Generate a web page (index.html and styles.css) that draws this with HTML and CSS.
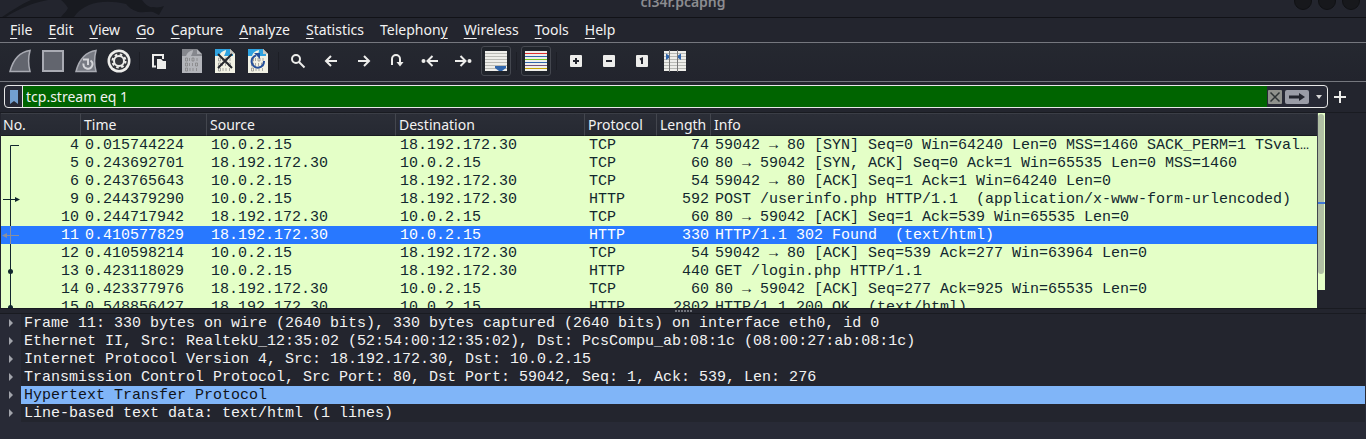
FILE: index.html
```html
<!DOCTYPE html>
<html lang="en">
<head>
<meta charset="utf-8">
<title>cl34r.pcapng</title>
<link rel="stylesheet" href="styles.css">
</head>
<body>
<header class="titlebar">
  <svg class="dragon" width="170" height="17" viewBox="0 0 170 17" aria-hidden="true">
    <path d="M2 17C12 10 22 4 31 0H48C32 3 18 9 6 17Z" fill="#181a20"/>
    <path d="M61 0H142C145 4 149 8 153 7C158 8 161 7 164 6L159 15L153 12C147 11 141 14 136 11C130 9 128 6 126 4C112 1 100 1 89 5C82 8 77 12 74 17H61C64 13 67 11 68 8C66 5 64 2 61 0Z" fill="#181a20"/>
  </svg>
  <span class="caption">cl34r.pcapng</span>
  <div class="winbuttons"><button aria-label="Minimize"></button><button aria-label="Maximize"></button><button aria-label="Close"></button></div>
</header>
<nav class="menubar">
  <button><u>F</u>ile</button><button><u>E</u>dit</button><button><u>V</u>iew</button><button><u>G</u>o</button><button><u>C</u>apture</button><button><u>A</u>nalyze</button><button><u>S</u>tatistics</button><button>Telephon<u>y</u></button><button><u>W</u>ireless</button><button><u>T</u>ools</button><button><u>H</u>elp</button>
</nav>
<div class="toolbar">
  <button aria-label="Start capture"><svg viewBox="0 0 24 24"><path d="M2 22.500C5 11 11 3 22 1.500C20 9 20 15 22 22.500Z" fill="#62656e" stroke="#a9abb3" stroke-width="1.500"/></svg></button>
  <button aria-label="Stop capture"><svg viewBox="0 0 24 24"><path d="M2 2H22V22H2Z" fill="#62656e" stroke="#a9abb3" stroke-width="2"/></svg></button>
  <button aria-label="Restart capture"><svg viewBox="0 0 24 24"><path d="M2 22.500C5 11 11 3 22 1.500C20 9 20 15 22 22.500Z" fill="#777a83" stroke="#a9abb3" stroke-width="1.500"/><path d="M16.500 11.500A4.500 4.500 0 1 1 9.500 14.500M9 10.500H14V16" fill="none" stroke="#d5d6da" stroke-width="2"/></svg></button>
  <button aria-label="Capture options"><svg viewBox="0 0 24 24"><circle cx="12" cy="12" r="11.500" fill="#ededeb"/><circle cx="12" cy="12" r="9" fill="#33353b"/><circle cx="12" cy="12" r="6.500" fill="none" stroke="#ededeb" stroke-width="2" stroke-dasharray="2.550"/><circle cx="12" cy="12" r="5" fill="none" stroke="#ededeb" stroke-width="2"/></svg></button>
  <span class="sep"></span>
  <button aria-label="Open"><svg viewBox="0 0 24 24"><path d="M9 17.500H6V6H16V10" fill="none" stroke="#ededeb" stroke-width="2"/><path d="M10 10H14L16 12H19V20H10Z" fill="#ededeb"/></svg></button>
  <button aria-label="Save"><svg viewBox="0 0 24 24"><path d="M2 0H17L22 5V24H2Z" fill="#b3b5ba"/><path d="M2 0H17V5H22V7H11C12 5 13 3 13 1C9 2 7 4 6 7H2Z" fill="#85878d"/><use href="#bits"/></svg></button>
  <button aria-label="Close file"><svg viewBox="0 0 24 24"><path d="M2 0H17L22 5V24H2Z" fill="#f2f2e4"/><path d="M2 0H17V5H20V7H11C12 5 13 3 13 1C9 2 7 4 6 7H2Z" fill="#2fa3e0"/><path d="M17 0V5H22Z" fill="#c9c9c0"/><use href="#bits"/><path d="M5 5L19 19M19 5L5 19" stroke="#24272c" stroke-width="2"/></svg></button>
  <button aria-label="Reload"><svg viewBox="0 0 24 24"><path d="M2 0H17L22 5V24H2Z" fill="#f2f2e4"/><path d="M2 0H17V5H20V7H11C12 5 13 3 13 1C9 2 7 4 6 7H2Z" fill="#2fa3e0"/><path d="M17 0V5H22Z" fill="#c9c9c0"/><use href="#bits"/><path d="M18 12A6.200 6.200 0 1 1 10 6.500" fill="none" stroke="#24509c" stroke-width="2"/><path d="M8 4H14V10Z" fill="#24509c"/></svg></button>
  <span class="sep"></span>
  <button aria-label="Find"><svg viewBox="0 0 24 24"><circle cx="10" cy="10" r="4" fill="none" stroke="#ededeb" stroke-width="2"/><path d="M13 13L18.500 18.500" stroke="#ededeb" stroke-width="2"/></svg></button>
  <button aria-label="Previous packet"><svg viewBox="0 0 24 24"><path d="M18 12H7M12 7L7 12L12 17" fill="none" stroke="#ededeb" stroke-width="2"/></svg></button>
  <button aria-label="Next packet"><svg viewBox="0 0 24 24"><path d="M6 12H17M12 7L17 12L12 17" fill="none" stroke="#ededeb" stroke-width="2"/></svg></button>
  <button aria-label="Go to packet"><svg viewBox="0 0 24 24"><path d="M7 16V10A4 4 0 0 1 15 10V16" fill="none" stroke="#ededeb" stroke-width="2"/><path d="M11.500 13H18.500L15 17.500Z" fill="#ededeb"/></svg></button>
  <button aria-label="First packet"><svg viewBox="0 0 24 24"><path d="M20 12H10M14.500 7L9.500 12L14.500 17" fill="none" stroke="#ededeb" stroke-width="2"/><circle cx="5.500" cy="12" r="2" fill="#ededeb"/></svg></button>
  <button aria-label="Last packet"><svg viewBox="0 0 24 24"><path d="M4 12H14M9.500 7L14.500 12L9.500 17" fill="none" stroke="#ededeb" stroke-width="2"/><circle cx="18.500" cy="12" r="2" fill="#ededeb"/></svg></button>
  <button class="on" aria-label="Auto scroll"><svg viewBox="0 0 24 24"><path d="M1 2H23V22H1Z" fill="#eeeeea"/><path d="M1 4.500H23M1 7.500H23M1 10.500H23M1 13.500H23M1 16.500H23M1 19.500H23" stroke="#b9bab5"/><path d="M11 17H22V19L18 22H15L11 19Z" fill="#2f65ab"/></svg></button>
  <span class="sep"></span>
  <button class="on" aria-label="Colorize"><svg viewBox="0 0 24 24"><path d="M1 2H23V22H1Z" fill="#eeeeea"/><path d="M1 4.500H23" stroke="#e03030"/><path d="M1 7.500H23M1 13.500H23" stroke="#2f65ab"/><path d="M1 10.500H23" stroke="#73c81c"/><path d="M1 16.500H23" stroke="#75507b"/><path d="M1 19.500H23" stroke="#c4a000"/></svg></button>
  <span class="sep"></span>
  <button aria-label="Zoom in"><svg viewBox="0 0 24 24"><rect x="6" y="6" width="12" height="12" rx="1" fill="#ededeb"/><path d="M9 12H15M12 9V15" stroke="#23252e" stroke-width="2"/></svg></button>
  <button aria-label="Zoom out"><svg viewBox="0 0 24 24"><rect x="6" y="6" width="12" height="12" rx="1" fill="#ededeb"/><path d="M9 12H15" stroke="#23252e" stroke-width="2"/></svg></button>
  <button aria-label="Normal size"><svg viewBox="0 0 24 24"><rect x="6" y="6" width="12" height="12" rx="1" fill="#ededeb"/><path d="M10 10.500L12 9.500V15" fill="none" stroke="#23252e" stroke-width="2"/></svg></button>
  <button aria-label="Resize columns"><svg viewBox="0 0 24 24"><path d="M1 2H23V22H1Z" fill="#eeeeea"/><path d="M1 4.500H23M1 7.500H23M1 10.500H23M1 13.500H23M1 16.500H23M1 19.500H23" stroke="#b9bab5"/><path d="M6.500 1V23M14.500 1V23" stroke="#777"/><path d="M3 4.500L6 6.500V9L3 11ZM18 4.500L15 6.500V9L18 11Z" fill="#2f65ab"/></svg></button>
</div>
<div class="filterbar">
  <div class="filter">
    <button class="mark" aria-label="Bookmarks"><svg width="8" height="14" viewBox="0 0 8 14"><path d="M0 0H8V14L4 11L0 14Z" fill="#729fcf"/></svg></button>
    <input type="text" aria-label="Display filter" value="tcp.stream eq 1">
    <button class="clear" aria-label="Clear"><svg width="14" height="14" viewBox="0 0 14 14"><rect width="14" height="14" rx="1" fill="#8f918c"/><path d="M2.500 2.500L11.500 11.500M11.500 2.500L2.500 11.500" stroke="#2e3436" stroke-width="1.500"/></svg></button>
    <button class="apply" aria-label="Apply"><svg width="24" height="14" viewBox="0 0 24 14"><rect width="24" height="14" rx="2" fill="#9a9ca6"/><path d="M4 5.500H14V3L20 7L14 11V8.500H4Z" fill="#23252e"/></svg></button>
    <button class="drop" aria-label="Recent filters"><svg width="6" height="4" viewBox="0 0 6 4"><path d="M0 0H6L3 4Z" fill="#d8d8d8"/></svg></button>
  </div>
  <button class="add" aria-label="Add filter button"><svg width="12" height="12" viewBox="0 0 12 12"><path d="M0 6H12M6 0V12" stroke="#ededeb" stroke-width="2"/></svg></button>
</div>
<main class="packets">
  <div class="list">
    <table>
      <colgroup><col class="c-no"><col class="c-time"><col class="c-src"><col class="c-dst"><col class="c-proto"><col class="c-len"><col></colgroup>
      <thead><tr><th>No.</th><th>Time</th><th>Source</th><th>Destination</th><th>Protocol</th><th>Length</th><th>Info</th></tr></thead>
      <tbody>
        <tr><td><div class="no"><svg width="20" height="18"><path d="M18 9.500H9.500V18"/></svg>4</div></td><td>0.015744224</td><td>10.0.2.15</td><td>18.192.172.30</td><td>TCP</td><td class="num">74</td><td>59042 → 80 [SYN] Seq=0 Win=64240 Len=0 MSS=1460 SACK_PERM=1 TSval…</td></tr>
        <tr><td><div class="no"><svg width="20" height="18"><path d="M9.500 0V18"/></svg>5</div></td><td>0.243692701</td><td>18.192.172.30</td><td>10.0.2.15</td><td>TCP</td><td class="num">60</td><td>80 → 59042 [SYN, ACK] Seq=0 Ack=1 Win=65535 Len=0 MSS=1460</td></tr>
        <tr><td><div class="no"><svg width="20" height="18"><path d="M9.500 0V18"/></svg>6</div></td><td>0.243765643</td><td>10.0.2.15</td><td>18.192.172.30</td><td>TCP</td><td class="num">54</td><td>59042 → 80 [ACK] Seq=1 Ack=1 Win=64240 Len=0</td></tr>
        <tr><td><div class="no"><svg width="20" height="18"><path d="M9.500 0V18M2 9.500H18"/><path class="solid" d="M14 7L19 9.500L14 12Z"/></svg>9</div></td><td>0.244379290</td><td>10.0.2.15</td><td>18.192.172.30</td><td>HTTP</td><td class="num">592</td><td>POST /userinfo.php HTTP/1.1&nbsp; (application/x-www-form-urlencoded)</td></tr>
        <tr><td><div class="no"><svg width="20" height="18"><path d="M9.500 0V18"/></svg>10</div></td><td>0.244717942</td><td>18.192.172.30</td><td>10.0.2.15</td><td>TCP</td><td class="num">60</td><td>80 → 59042 [ACK] Seq=1 Ack=539 Win=65535 Len=0</td></tr>
        <tr class="current"><td><div class="no"><svg width="20" height="18"><path d="M9.500 0V18M2 9.500H18"/><path class="solid" d="M6 7L1 9.500L6 12Z"/></svg>11</div></td><td>0.410577829</td><td>18.192.172.30</td><td>10.0.2.15</td><td>HTTP</td><td class="num">330</td><td>HTTP/1.1 302 Found&nbsp; (text/html)</td></tr>
        <tr><td><div class="no"><svg width="20" height="18"><path d="M9.500 0V18"/></svg>12</div></td><td>0.410598214</td><td>10.0.2.15</td><td>18.192.172.30</td><td>TCP</td><td class="num">54</td><td>59042 → 80 [ACK] Seq=539 Ack=277 Win=63964 Len=0</td></tr>
        <tr><td><div class="no"><svg width="20" height="18"><path d="M9.500 0V18"/><circle class="solid" cx="9.500" cy="9.500" r="2.500"/></svg>13</div></td><td>0.423118029</td><td>10.0.2.15</td><td>18.192.172.30</td><td>HTTP</td><td class="num">440</td><td>GET /login.php HTTP/1.1</td></tr>
        <tr><td><div class="no"><svg width="20" height="18"><path d="M9.500 0V18"/></svg>14</div></td><td>0.423377976</td><td>18.192.172.30</td><td>10.0.2.15</td><td>TCP</td><td class="num">60</td><td>80 → 59042 [ACK] Seq=277 Ack=925 Win=65535 Len=0</td></tr>
        <tr><td><div class="no"><svg width="20" height="18"><path d="M9.500 0V18"/><circle class="solid" cx="9.500" cy="9.500" r="2.500"/></svg>15</div></td><td>0.548856427</td><td>18.192.172.30</td><td>10.0.2.15</td><td>HTTP</td><td class="num">2802</td><td>HTTP/1.1 200 OK&nbsp; (text/html)</td></tr>
      </tbody>
    </table>
  </div>
  <div class="minimap"><div class="thumb"></div><div class="here"></div></div>
</main>
<div class="splitter"><i></i><i></i><i></i><i></i><i></i><i></i></div>
<ul class="details">
  <li><button aria-label="Expand"><svg width="5" height="8"><path d="M0 0L4 4L0 8Z"/></svg></button><span>Frame 11: 330 bytes on wire (2640 bits), 330 bytes captured (2640 bits) on interface eth0, id 0</span></li>
  <li><button aria-label="Expand"><svg width="5" height="8"><path d="M0 0L4 4L0 8Z"/></svg></button><span>Ethernet II, Src: RealtekU_12:35:02 (52:54:00:12:35:02), Dst: PcsCompu_ab:08:1c (08:00:27:ab:08:1c)</span></li>
  <li><button aria-label="Expand"><svg width="5" height="8"><path d="M0 0L4 4L0 8Z"/></svg></button><span>Internet Protocol Version 4, Src: 18.192.172.30, Dst: 10.0.2.15</span></li>
  <li><button aria-label="Expand"><svg width="5" height="8"><path d="M0 0L4 4L0 8Z"/></svg></button><span>Transmission Control Protocol, Src Port: 80, Dst Port: 59042, Seq: 1, Ack: 539, Len: 276</span></li>
  <li class="picked"><button aria-label="Expand"><svg width="5" height="8"><path d="M0 0L4 4L0 8Z"/></svg></button><span>Hypertext Transfer Protocol</span></li>
  <li><button aria-label="Expand"><svg width="5" height="8"><path d="M0 0L4 4L0 8Z"/></svg></button><span>Line-based text data: text/html (1 lines)</span></li>
</ul>
<svg class="defs" width="0" height="0" aria-hidden="true"><defs><g id="bits" fill="none" stroke="#777" stroke-opacity="0.600" stroke-width="1"><path d="M5.500 9H7.500V12H5.500ZM9.500 9V12M12 9H14V12H12ZM17 9V12M5.500 14H7.500V17H5.500ZM9.500 14V17M12.500 14V17M15.500 14H17.500V17H15.500ZM5.500 19H7.500V22H5.500ZM10 19V22M13 19V22M16.500 19V22"/></g></defs></svg>
</body>
</html>
```
FILE: styles.css
```css
* { box-sizing: border-box; }
body {
  margin: 0;
  height: 100vh;
  display: flex;
  flex-direction: column;
  overflow: hidden;
  background: #23252e;
  color: #f2f2f2;
  font: 14px/20px "Noto Sans", sans-serif;
}
button {
  display: flex;
  align-items: center;
  justify-content: center;
  margin: 0;
  padding: 0;
  border: 0;
  background: none;
  color: inherit;
  font: inherit;
}
svg { display: block; flex: none; }
.titlebar {
  display: grid;
  grid-template-columns: 1fr auto 1fr;
  grid-template-rows: 17px;
  align-items: end;
  height: 18px;
  overflow: hidden;
  border-bottom: 1px solid #111217;
}
.dragon { grid-column: 1; }
.caption { color: #8b8c90; font-weight: 600; padding-bottom: 5px; }
.winbuttons { display: flex; justify-content: flex-end; gap: 6px; padding: 0 6px 7px; }
.winbuttons button { width: 18px; height: 18px; border-radius: 50%; background: #17181c; border: 1px solid #101114; }
.menubar {
  display: flex;
  gap: 16px;
  height: 25px;
  padding: 0 10px;
  border-bottom: 1px solid #75777e;
}
.menubar button { display: block; padding-bottom: 1px; }
.menubar u { text-underline-offset: 3px; text-decoration-thickness: 1px; }
.toolbar {
  display: flex;
  align-items: center;
  gap: 1px;
  height: 39px;
  padding: 0 4px 2px;
  border-bottom: 1px solid #75777e;
  background: linear-gradient(#252830, #22242d);
}
.toolbar button { width: 32px; height: 30px; border-radius: 3px; }
.toolbar button svg { width: 24px; height: 24px; }
.toolbar .on { width: 30px; margin: 0 1px; border: 1px solid #44474f; background: #20242b; }
.sep { width: 6px; height: 18px; background: linear-gradient(90deg, transparent 3px, #1c1e25 3px, #1c1e25 4px, transparent 4px); }
.filterbar { display: flex; align-items: center; gap: 6px; padding: 3px 20px 4px 4px; }
.filter {
  flex: 1;
  display: flex;
  align-items: center;
  height: 23px;
  overflow: hidden;
  border: 1px solid #e8e8e8;
  border-radius: 4px;
  background: #272935;
}
.mark { width: 17px; }
.filter input {
  flex: 1;
  min-width: 0;
  height: 21px;
  padding: 0 3px 1px;
  border: 0;
  border-left: 1px solid #e8e8e8;
  background: #006400;
  color: #f2f2f2;
  font: inherit;
}
.clear { width: 16px; }
.apply { width: 28px; }
.drop { width: 16px; }
.packets {
  flex: 1;
  min-height: 0;
  display: flex;
  padding: 0 41px 0 1px;
  border-top: 1px solid #191b21;
  border-bottom: 1px solid #191b21;
}
.list { flex: 1; min-width: 0; overflow: hidden; }
table { width: 100%; table-layout: fixed; border-collapse: separate; border-spacing: 0; }
.c-no { width: 79px; }
.c-time { width: 126px; }
.c-src { width: 189px; }
.c-dst { width: 189px; }
.c-proto { width: 72px; }
.c-len { width: 54px; }
th {
  height: 23px;
  padding: 1px 0 0 3px;
  border-top: 1px solid #3b3e46;
  border-bottom: 1px solid #191b21;
  border-left: 1px solid #43464e;
  background: linear-gradient(#2b2e37, #262932);
  font-weight: 400;
  text-align: left;
}
th:first-child { border-left: 0; padding-left: 2px; }
td {
  height: 18px;
  padding: 2px 0 0 5px;
  overflow: hidden;
  background: #e4ffc7;
  color: #12272e;
  font: 15px/16px "Liberation Mono", monospace;
  white-space: nowrap;
}
td:first-child { padding: 2px 1px 0 0; }
td.num { padding: 2px 1px 0 0; text-align: right; }
.no { display: flex; justify-content: space-between; }
.no svg { margin-top: -2px; fill: none; stroke: #12272e; }
.no .solid { fill: #12272e; stroke: none; }
.current td { background: #2878ff; color: #fff; }
.current svg { stroke: #8a8f9c; }
.current .solid { fill: #8a8f9c; }
.minimap {
  position: relative;
  width: 8px;
  margin-bottom: 18px;
  border-left: 1px solid #43464e;
  background: #e4ffc7;
}
.thumb { width: 6px; height: 160px; margin-top: 1px; border-radius: 3px; background: #b0bfa3; }
.here { position: absolute; left: 0; right: 0; top: 50%; height: 2px; background: #3f78d8; }
.splitter { display: flex; justify-content: center; gap: 1px; height: 5px; padding-top: 1px; border-bottom: 1px solid #191b21; }
.splitter i { width: 2px; height: 2px; background: #70727a; }
.details {
  margin: 0;
  padding: 0 1px 17px;
  list-style: none;
  background: #282a36;
  font: 15px/16px "Liberation Mono", monospace;
}
.details li { display: flex; }
.details button { width: 20px; }
.details svg { fill: #a2a4ab; }
.details span { flex: 1; padding: 2px 0 0 3px; background: #23252e; white-space: nowrap; overflow: hidden; }
.details .picked span { background: #80b5f8; color: #10131a; }
.defs { position: absolute; }
```
